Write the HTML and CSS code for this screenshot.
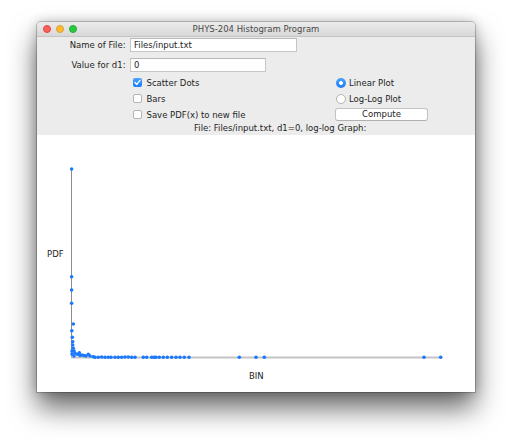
FILE: index.html
```html
<!DOCTYPE html>
<html>
<head>
<meta charset="utf-8">
<title>PHYS-204 Histogram Program</title>
<link rel="stylesheet" href="styles.css">
</head>
<body>
<div class="window">
  <div class="titlebar">
    <div class="lights">
      <span class="light red"></span>
      <span class="light yellow"></span>
      <span class="light green"></span>
    </div>
    <div class="title">PHYS-204 Histogram Program</div>
    <div></div>
  </div>
  <div class="panel">
    <div class="field-row">
      <span class="lbl">Name of File:</span>
      <div class="field wide">Files/input.txt</div>
    </div>
    <div class="field-row second">
      <span class="lbl">Value for d1:</span>
      <div class="field narrow">0</div>
    </div>
    <div class="options">
      <div class="opt"><span class="check on"><svg viewBox="0 0 9 9" width="9" height="9"><path d="M2 4.6 L3.8 6.4 L7 2.4" fill="none" stroke="#fff" stroke-width="1.4" stroke-linecap="round" stroke-linejoin="round"/></svg></span>Scatter Dots</div>
      <div class="opt"><span class="radio on"></span>Linear Plot</div>
      <div class="opt"><span class="check"></span>Bars</div>
      <div class="opt"><span class="radio"></span>Log-Log Plot</div>
      <div class="opt"><span class="check"></span>Save PDF(x) to new file</div>
      <div class="opt"><button class="btn">Compute</button></div>
    </div>
    <div class="status">File: Files/input.txt, d1=0, log-log Graph:</div>
  </div>
  <div class="plot">
    <svg class="chart" viewBox="0 0 438 257" width="438" height="257">
      <line x1="34.5" y1="34" x2="34.5" y2="222.5" stroke="#8e8e8e" stroke-width="1"/>
      <line x1="34" y1="222.5" x2="404.5" y2="222.5" stroke="#c4c4c4" stroke-width="1.8"/>
      <text x="10" y="121.5" class="axis-label">PDF</text>
      <text x="212" y="243.5" class="axis-label">BIN</text>
      <g fill="#1a78ff">
        <circle cx="34.6" cy="34" r="1.8"/>
        <circle cx="34.6" cy="141.7" r="1.8"/>
        <circle cx="34.6" cy="155" r="1.8"/>
        <circle cx="34.6" cy="168.3" r="1.8"/>
        <circle cx="36.3" cy="189" r="1.8"/>
        <circle cx="34.8" cy="195.7" r="1.8"/>
        <circle cx="35.3" cy="202.3" r="1.8"/>
        <circle cx="35.7" cy="206.7" r="1.8"/>
        <circle cx="35.7" cy="210" r="1.8"/>
        <circle cx="36.3" cy="213.3" r="1.8"/>
        <circle cx="35" cy="216" r="1.8"/>
        <circle cx="35" cy="219" r="1.8"/>
        <circle cx="37" cy="216" r="1.8"/>
        <circle cx="38" cy="218.3" r="1.8"/>
        <circle cx="37" cy="221" r="1.8"/>
        <circle cx="40.3" cy="219.3" r="1.8"/>
        <circle cx="42.3" cy="217.7" r="1.8"/>
        <circle cx="43" cy="220.5" r="1.8"/>
        <circle cx="45" cy="220" r="1.8"/>
        <circle cx="47" cy="220.5" r="1.8"/>
        <circle cx="49" cy="221" r="1.8"/>
        <circle cx="51.3" cy="219.3" r="1.8"/>
        <circle cx="53" cy="221" r="1.8"/>
        <circle cx="56.3" cy="221.7" r="1.8"/>
        <circle cx="58" cy="222.3" r="1.8"/>
        <circle cx="61.3" cy="222.3" r="1.8"/>
        <circle cx="64.7" cy="222" r="1.8"/>
        <circle cx="68" cy="222.3" r="1.8"/>
        <circle cx="71.3" cy="222.3" r="1.8"/>
        <circle cx="74" cy="222.3" r="1.8"/>
        <circle cx="78" cy="222.3" r="1.8"/>
        <circle cx="81.3" cy="222.3" r="1.8"/>
        <circle cx="84.7" cy="222.3" r="1.8"/>
        <circle cx="88" cy="222" r="1.8"/>
        <circle cx="91.3" cy="222" r="1.8"/>
        <circle cx="94.7" cy="222.3" r="1.8"/>
        <circle cx="98" cy="222.3" r="1.8"/>
        <circle cx="106.3" cy="222.3" r="1.8"/>
        <circle cx="109.7" cy="222.3" r="1.8"/>
        <circle cx="114.7" cy="222.3" r="1.8"/>
        <circle cx="117" cy="222.3" r="1.8"/>
        <circle cx="119" cy="222.3" r="1.8"/>
        <circle cx="122.3" cy="222.3" r="1.8"/>
        <circle cx="126.3" cy="222.3" r="1.8"/>
        <circle cx="130.3" cy="222.3" r="1.8"/>
        <circle cx="134.7" cy="222.3" r="1.8"/>
        <circle cx="139" cy="222.3" r="1.8"/>
        <circle cx="143" cy="222.3" r="1.8"/>
        <circle cx="147.3" cy="222.3" r="1.8"/>
        <circle cx="152" cy="222.3" r="1.8"/>
        <circle cx="202.3" cy="222.3" r="1.8"/>
        <circle cx="219" cy="222.3" r="1.8"/>
        <circle cx="227.3" cy="222.3" r="1.8"/>
        <circle cx="387" cy="222.3" r="1.8"/>
        <circle cx="403.7" cy="222.3" r="1.8"/>
      </g>
    </svg>
  </div>
</div>
</body>
</html>
```
FILE: styles.css
```css
* { box-sizing: border-box; }

html, body {
  margin: 0;
  padding: 0;
  background: #ffffff;
}

body {
  height: 445px;
  padding: 22px 0 0 37px;
  font-family: "DejaVu Sans", "Liberation Sans", sans-serif;
  font-size: 8.5px;
  color: #1e1e1e;
}

.window {
  width: 438px;
  height: 370px;
  display: flex;
  flex-direction: column;
  border-radius: 4px 4px 0 0;
  overflow: hidden;
  background: #ececec;
  box-shadow:
    0 0 0 1px rgba(0, 0, 0, 0.2),
    0 0 12px rgba(0, 0, 0, 0.22),
    0 16px 28px rgba(0, 0, 0, 0.6);
}

.titlebar {
  height: 15px;
  flex: none;
  display: grid;
  grid-template-columns: 1fr auto 1fr;
  align-items: center;
  background: linear-gradient(#ebebeb, #d8d8d8);
  border-bottom: 1px solid #c4c4c4;
}

.lights {
  display: flex;
  gap: 5px;
  padding-left: 6px;
}

.light {
  width: 8px;
  height: 8px;
  border-radius: 50%;
}

.red { background: #fc5f57; border: 0.5px solid #df4744; }
.yellow { background: #fdbc2e; border: 0.5px solid #de9f34; }
.green { background: #2ac840; border: 0.5px solid #27aa35; }

.title {
  color: #4a4a4a;
  font-size: 8.5px;
  line-height: 14px;
}

.panel {
  flex: none;
  height: 98px;
  padding-top: 1px;
  background: #ececec;
}

.field-row {
  display: flex;
  align-items: center;
  height: 14px;
}

.field-row.second {
  margin-top: 5.5px;
}

.lbl {
  width: 93px;
  padding-right: 4.5px;
  text-align: right;
  line-height: 14px;
}

.field {
  height: 14px;
  line-height: 12px;
  padding-left: 3px;
  background: #ffffff;
  border: 1px solid #c6c6c6;
  border-top-color: #b8b8b8;
}

.field.wide { width: 167px; }
.field.narrow { width: 136px; }

.options {
  margin-top: 3px;
  padding-left: 96px;
  display: grid;
  grid-template-columns: 203px 94px;
  grid-auto-rows: 16px;
}

.opt {
  display: flex;
  align-items: center;
  line-height: 12px;
}

.check {
  width: 9px;
  height: 9px;
  margin-right: 4.5px;
  border-radius: 2px;
  background: #ffffff;
  border: 1px solid #b3b3b3;
  display: flex;
  align-items: center;
  justify-content: center;
}

.check.on {
  border: none;
  background: linear-gradient(#4aa3fd, #1a7cfa);
}

.check svg { display: block; }

.radio {
  width: 10px;
  height: 10px;
  margin-right: 3px;
  border-radius: 50%;
  background: #ffffff;
  border: 1px solid #b3b3b3;
}

.radio.on {
  border: none;
  background: radial-gradient(circle, #ffffff 0 1.7px, transparent 2.2px), linear-gradient(#4aa3fd, #1a7cfa);
}

.btn {
  width: 93px;
  height: 13px;
  margin-left: -1px;
  padding: 0;
  font-family: inherit;
  font-size: 8.5px;
  line-height: 11px;
  color: #1e1e1e;
  background: #ffffff;
  border: 1px solid #c3c3c3;
  border-bottom-color: #b0b0b0;
  border-radius: 3px;
}

.status {
  height: 11px;
  line-height: 11px;
  padding-left: 157px;
}

.plot {
  flex: 1;
  background: #ffffff;
}

.chart {
  display: block;
}

.axis-label {
  font-family: "DejaVu Sans", "Liberation Sans", sans-serif;
  font-size: 8.5px;
  fill: #1e1e1e;
}
```
